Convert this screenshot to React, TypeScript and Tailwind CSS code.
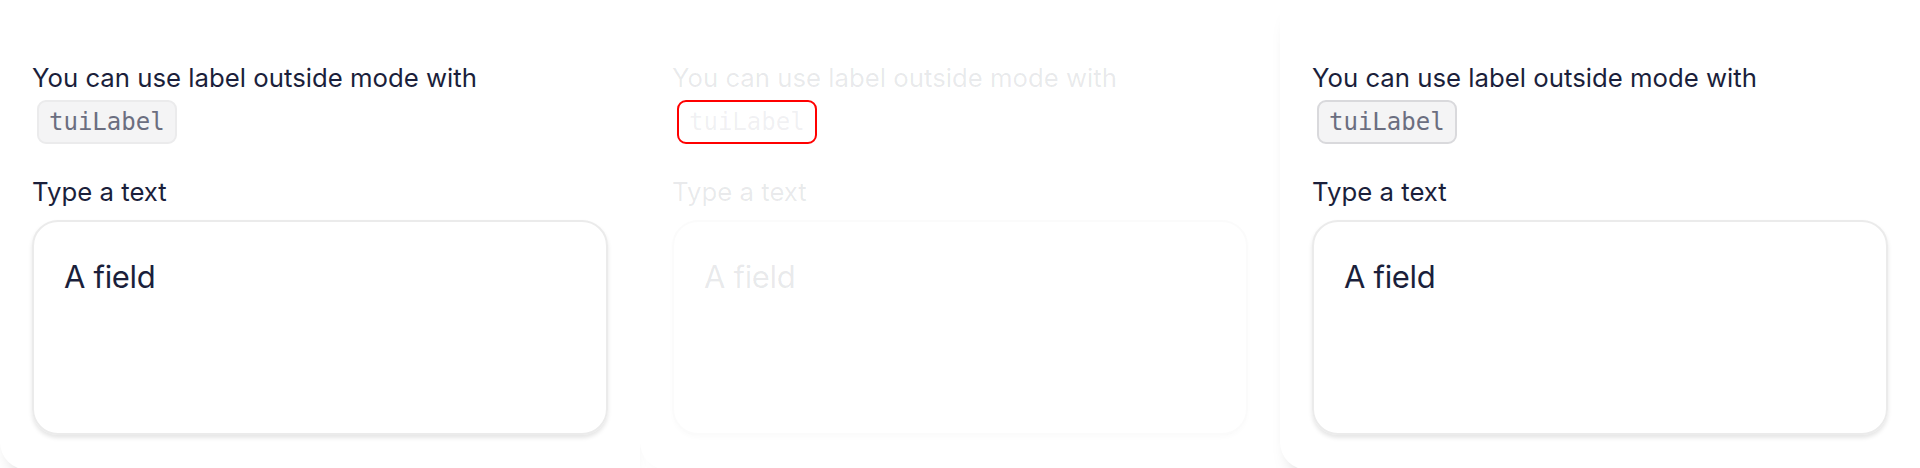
import React from "react";

// ─── Label-outside demo card ────────────────────────────────────────────────

function DemoCard({ disabled = false, hovered = false, z }: { disabled?: boolean; hovered?: boolean; z: string }) {
  const text = disabled ? "text-[#1b1f3b]/10" : "text-[#1b1f3b]";

  return (
    <div
      className={`relative h-[470px] w-[640px] shrink-0 rounded-bl-[28px] bg-white px-8 pt-[62px] ${z} ${
        disabled
          ? "shadow-[0_12px_20px_-15px_rgba(0,0,0,0.06)]"
          : "shadow-[0_12px_20px_-15px_rgba(0,0,0,0.35)]"
      }`}
      style={{ fontFamily: "Inter, 'Noto Sans', sans-serif" }}
    >
      <p className={`text-[25.75px] leading-[32px] ${text}`}>You can use label outside mode with</p>

      <div className="mt-[6px] flex">
        <code
          className={`ml-[5px] flex h-[44px] items-center rounded-[9px] px-[10px] text-[24px] ${
            disabled
              ? "border-2 border-[#ff0000] text-[#6b6e80]/10"
              : hovered
                ? "border-2 border-[#d9d9dc] bg-[#f4f4f5] text-[#6b6e80]"
                : "border-2 border-[#ebebec] bg-[#f4f4f5] text-[#6b6e80]"
          }`}
          style={{ fontFamily: "'DejaVu Sans Mono', 'Liberation Mono', monospace" }}
        >
          tuiLabel
        </code>
      </div>

      <p className={`mt-[32px] text-[25.75px] leading-[32px] ${text}`}>Type a text</p>

      <div
        className={`mt-[12px] h-[215px] w-[576px] rounded-[26px] border-2 px-[30px] pt-[35px] ${
          disabled
            ? "border-[#ebebeb]/20 shadow-[0_3px_4px_rgba(0,0,0,0.015)]"
            : "border-[#ebebeb] shadow-[0_3px_4px_rgba(0,0,0,0.1)]"
        }`}
      >
        <span className={`text-[31px] leading-[40px] tracking-[-0.01em] ${text}`}>A field</span>
      </div>
    </div>
  );
}

export default function App() {
  return (
    <div className="h-[468px] w-[1920px] overflow-hidden bg-white">
      <div className="flex">
        <DemoCard z="z-10" />
        <DemoCard z="z-20" disabled />
        <DemoCard z="z-30" hovered />
      </div>
    </div>
  );
}
